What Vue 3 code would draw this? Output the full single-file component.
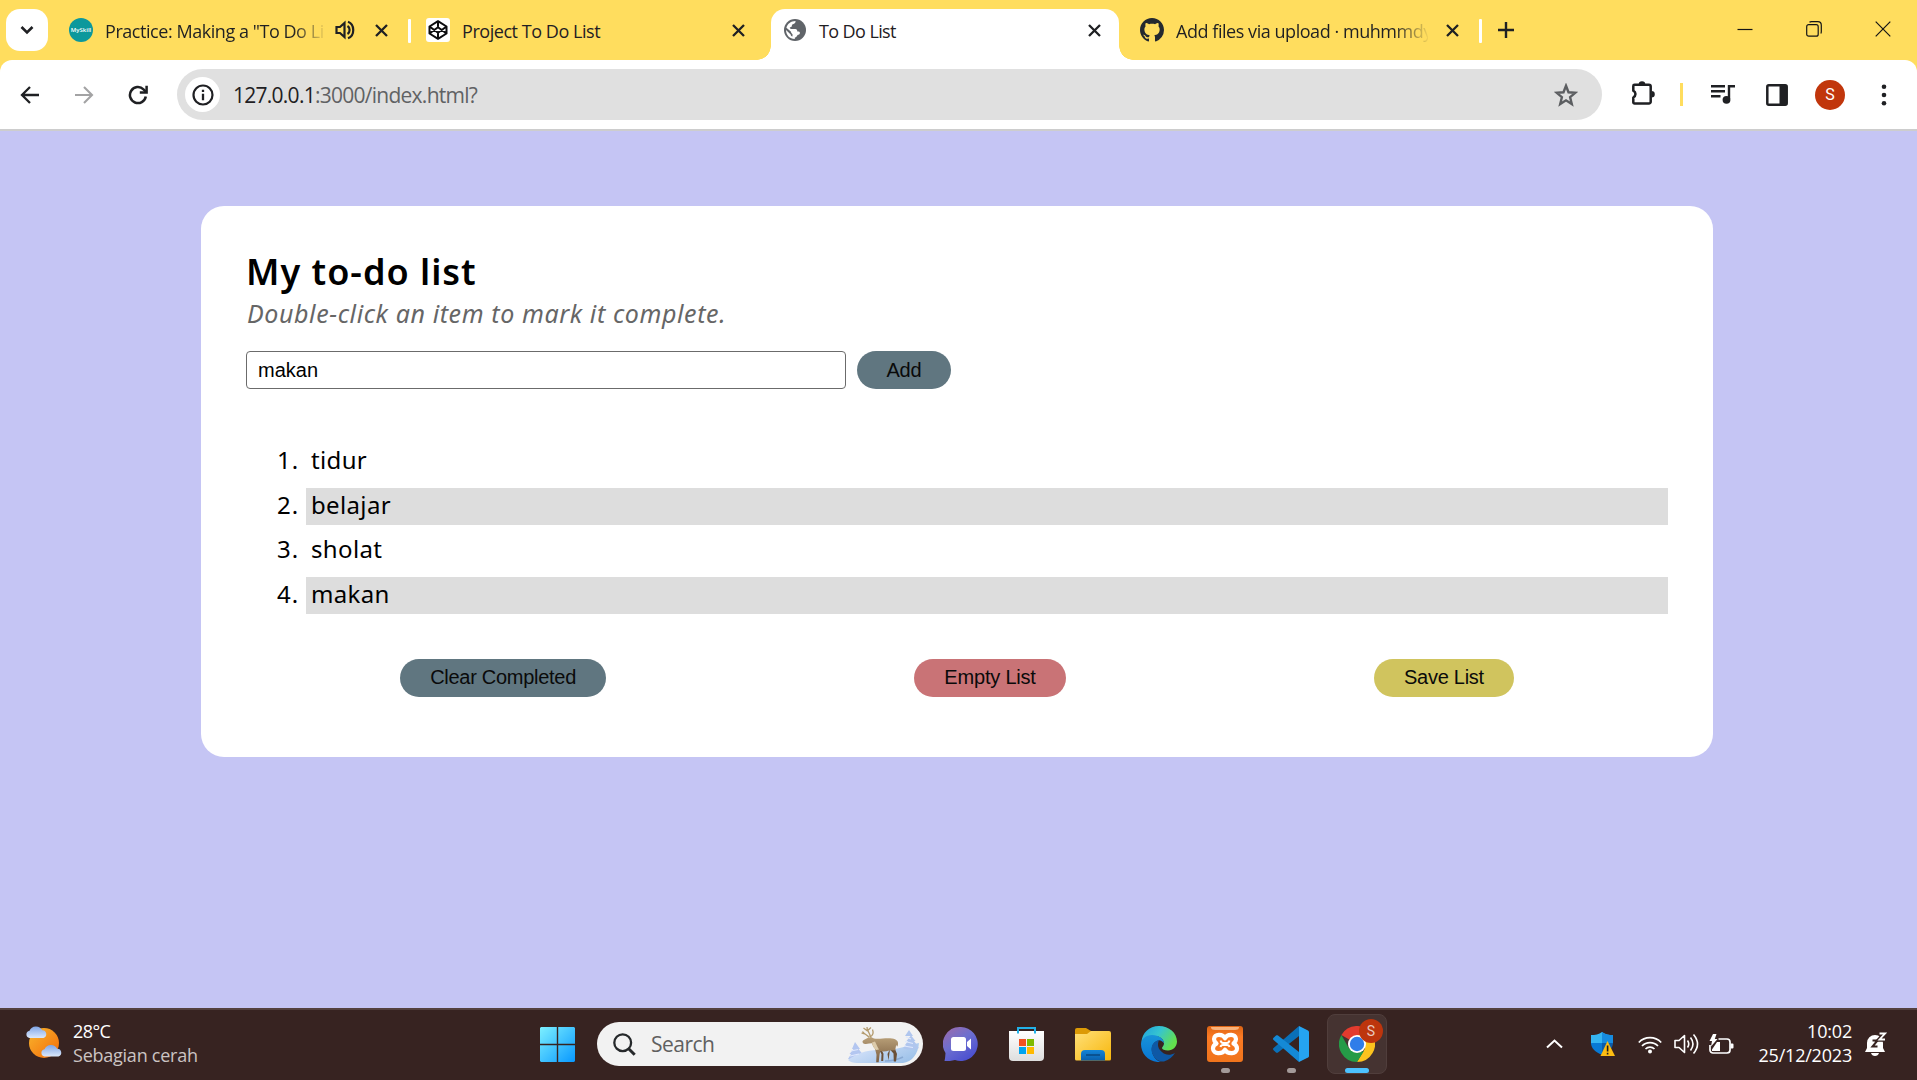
<script setup>
import { ref } from 'vue'

const draft = ref('makan')
const items = ref(['tidur', 'belajar', 'sholat', 'makan'])
</script>

<template>
  <div class="screen">
    <header class="tabstrip">
      <div class="tabsearch">
        <svg width="14" height="10" viewBox="0 0 14 10"><path d="M1.500 2l5.500 5.500L12.500 2" fill="none" stroke="#1f2023" stroke-width="2.600" /></svg>
      </div>
      <div class="tab t1">
        <span class="myskill">MySkill</span>
        <span class="title fade">Practice: Making a "To Do Li</span>
        <svg class="speaker" width="20" height="20" viewBox="0 0 20 20" fill="none" stroke="#1f2023" stroke-width="2.200"><path d="M1.500 7v6h3.500l4.500 4V3L5 7z" /><path d="M12.500 6c2.800 1.600 2.800 6.400 0 8" /><path d="M13 1.700c7 2.600 7 14 0 16.600" /></svg>
        <svg class="x" width="13" height="13" viewBox="0 0 13 13"><path d="M1 1l11 11M12 1L1 12" /></svg>
      </div>
      <i class="sep"></i>
      <div class="tab t2">
        <span class="codepen">
          <svg width="20" height="20" viewBox="0 0 20 20" fill="none" stroke="#0c0c0e" stroke-width="2" stroke-linejoin="round"><path d="M10 1.200l8.500 5.300v7L10 18.800l-8.500-5.300v-7zM10 1.200v5.300M10 13.500v5.300M1.500 6.500L10 12.800l8.500-6.300M1.500 13.500L10 7.200l8.500 6.300" /></svg>
        </span>
        <span class="title s2">Project To Do List</span>
        <svg class="x" width="13" height="13" viewBox="0 0 13 13"><path d="M1 1l11 11M12 1L1 12" /></svg>
      </div>
      <div class="tab t3">
        <svg class="globe" width="22" height="22" viewBox="0 0 22 22"><circle cx="11" cy="11" r="11" fill="#606469" /><path d="M11.500 2c.3 1.400-.6 2.600-2 3-1 .2-1.600.8-1.700 1.900-.2 1.100-1 1.300-2 1.300.1 1.400.9 1.900 2.200 1.900h3.300c1.500.1 2 1.100 2 2.500 1.500-.1 2.700.3 2.600 1.500-.1 1.500-1.400 1.700-2.400 2-.6 1.300-1.400 2.300-2.700 2.700V20C5.800 20 2 16 2 11l4.700 4.400c0 1.100.5 1.800 1.800 2v-2.200c-1-.9-1.500-1.700-1.700-2.700L2.400 8.700C3.500 4.800 7 2 11.500 2z" fill="#fff" /></svg>
        <span class="title s3">To Do List</span>
        <svg class="x" width="13" height="13" viewBox="0 0 13 13"><path d="M1 1l11 11M12 1L1 12" /></svg>
      </div>
      <div class="tab t4">
        <svg class="github" width="24" height="24" viewBox="0 0 16 16" fill="#24292f"><path d="M8 0C3.580 0 0 3.580 0 8c0 3.540 2.290 6.530 5.470 7.590.4.070.55-.17.55-.38 0-.19-.01-.82-.01-1.490-2.010.37-2.530-.49-2.690-.94-.09-.23-.48-.94-.82-1.130-.28-.15-.68-.52-.01-.53.630-.01 1.080.58 1.230.820.720 1.210 1.870.870 2.330.660.070-.52.280-.87.510-1.070-1.780-.2-3.640-.89-3.640-3.950 0-.87.310-1.590.820-2.150-.08-.2-.36-1.020.080-2.120 0 0 .67-.21 2.200.820.640-.18 1.320-.27 2-.27s1.360.090 2 .270c1.530-1.040 2.200-.82 2.200-.82.440 1.100.160 1.920.080 2.120.510.560.820 1.270.820 2.150 0 3.070-1.870 3.750-3.650 3.950.290.250.540.730.540 1.480 0 1.070-.01 1.930-.01 2.200 0 .21.150.460.550.380A8.010 8.010 0 0 0 16 8c0-4.420-3.580-8-8-8z" /></svg>
        <span class="title fade s4">Add files via upload · muhmmdy</span>
        <svg class="x" width="13" height="13" viewBox="0 0 13 13"><path d="M1 1l11 11M12 1L1 12" /></svg>
      </div>
      <i class="sep"></i>
      <svg class="plus" width="16" height="16" viewBox="0 0 16 16"><path d="M8 0v16M0 8h16" stroke="#1f2023" stroke-width="2.400" /></svg>
      <div class="wincontrols">
        <svg width="16" height="16" viewBox="0 0 16 16"><path d="M.5 8.500h15" /></svg>
        <svg width="16" height="16" viewBox="0 0 16 16"><rect x=".7" y="3.700" width="11.500" height="11.500" rx="2" /><path d="M3.500 1.200c.5-.4 1-.5 2-.5h6.300c2.200 0 3.500 1.300 3.500 3.500v6.300c0 1-.1 1.500-.5 2" /></svg>
        <svg width="16" height="16" viewBox="0 0 16 16"><path d="M.7.700l14.600 14.600M15.300.700L.7 15.300" /></svg>
      </div>
    </header>

    <nav class="toolbar">
      <svg class="back" width="20" height="18" viewBox="0 0 20 18" fill="none" stroke="#1f2023" stroke-width="2.300"><path d="M19 9H2M10 1L2 9l8 8" /></svg>
      <svg class="fwd" width="20" height="18" viewBox="0 0 20 18" fill="none" stroke="#a3a3a4" stroke-width="2.100"><path d="M1 9h17M10 1l8 8-8 8" /></svg>
      <svg class="reload" width="20" height="20" viewBox="0 0 20 20" fill="none" stroke="#1f2023" stroke-width="2.500"><path d="M17.800 11.500A8 8 0 1 1 15.500 4.300L18 6.800" /><path d="M18.600.8v6.800h-6.800" /></svg>
      <div class="omnibox">
        <span class="info"><svg width="22" height="22" viewBox="0 0 22 22"><circle cx="11" cy="11" r="9.500" fill="none" stroke="#1f2023" stroke-width="2.200" /><path d="M11 9.700v6.500M11 5.700v2.400" stroke="#1f2023" stroke-width="2.300" /></svg></span>
        <span class="url"><b>127.0.0.1</b>:3000/index.html?</span>
        <svg class="star" width="24" height="24" viewBox="0 0 24 24" fill="none" stroke="#5c5e61" stroke-width="2.400"><path d="M12 2.800l2.500 6.500 6.800.5-5.200 4.400 1.700 6.800-5.800-3.700-5.800 3.700 1.700-6.800-5.200-4.400 6.800-.5z" /></svg>
      </div>
      <svg class="ext" width="25" height="26" viewBox="0 0 25 26"><path d="M3.300 4.900a1.200 1.200 0 0 1 1.200-1.200h14.400a1.800 1.800 0 0 1 1.800 1.800v15.200a1.800 1.800 0 0 1-1.800 1.800H4.500a1.200 1.200 0 0 1-1.200-1.200v-4.800c2.900-1.600 2.900-5.200 0-6.800z" fill="none" stroke="#1f2023" stroke-width="2.500" stroke-linejoin="round" /><path d="M8.700 3.500a3.300 3.300 0 0 1 6.600 0zM21.500 10a3.300 3.300 0 0 1 0 6.600z" fill="#1f2023" /></svg>
      <i class="ysep"></i>
      <svg class="queue" width="24" height="22" viewBox="0 0 24 22"><path d="M0 3.300h14M0 8.300h14M0 13.300h9.500M18 16V3.300H24" fill="none" stroke="#1f2023" stroke-width="2.400" /><circle cx="15.500" cy="16.800" r="3.900" fill="#1f2023" /></svg>
      <svg class="panel" width="22" height="22" viewBox="0 0 22 22"><rect x="1.300" y="1.300" width="19.400" height="19.400" rx="1.500" fill="none" stroke="#1f2023" stroke-width="2.500" /><path d="M13.500 1h7v20h-7z" fill="#1f2023" /></svg>
      <span class="avatar">S</span>
      <svg class="dots" width="6" height="22" viewBox="0 0 6 22" fill="#1f2023"><circle cx="3" cy="2.700" r="2.300" /><circle cx="3" cy="11" r="2.300" /><circle cx="3" cy="19.300" r="2.300" /></svg>
    </nav>

    <main class="page">
      <section class="card">
        <h1>My to-do list</h1>
        <p class="hint"><em>Double-click an item to mark it complete.</em></p>
        <form class="entry" @submit.prevent>
          <input v-model="draft" type="text" />
          <button class="btn slate">Add</button>
        </form>
        <ol>
          <li v-for="(item, i) in items" :key="item"><span class="num">{{ i + 1 }}.</span><span class="item">{{ item }}</span></li>
        </ol>
        <div class="actions">
          <button class="btn slate">Clear Completed</button>
          <button class="btn red">Empty List</button>
          <button class="btn gold">Save List</button>
        </div>
      </section>
    </main>

    <footer class="taskbar">
      <div class="weather">
        <svg width="36" height="34" viewBox="0 0 36 34">
          <defs>
            <linearGradient id="sun" x1="0" y1="0" x2="1" y2="1"><stop offset="0" stop-color="#f8b62d" /><stop offset="1" stop-color="#f36b0a" /></linearGradient>
            <linearGradient id="cl" x1="0" y1="0" x2="0" y2="1"><stop offset="0" stop-color="#7fa5e6" /><stop offset="1" stop-color="#dbe8fb" /></linearGradient>
          </defs>
          <circle cx="18" cy="18" r="15" fill="url(#sun)" />
          <path d="M3.500 13a3.700 3.700 0 0 1 0-7.300 7 7 0 0 1 12.700-.5A4 4 0 0 1 17.500 13z" fill="url(#cl)" />
          <path d="M18.500 31.500a3.700 3.700 0 0 1 0-7.300 7 7 0 0 1 12.700-.5 4 4 0 0 1 1.300 7.800z" fill="url(#cl)" />
        </svg>
        <div><p class="temp">28°C</p><p class="cond">Sebagian cerah</p></div>
      </div>

      <div class="apps">
        <svg class="start" width="35" height="35" viewBox="0 0 35 35">
          <defs><linearGradient id="win" x1="0" y1="0" x2="1" y2="1"><stop offset="0" stop-color="#7df0ff" /><stop offset="1" stop-color="#0898ff" /></linearGradient></defs>
          <path d="M1 0h15.800v16.800H0V1zM18.200 0H34l1 1v15.800H18.200zM0 18.200h16.800V35H1l-1-1zM18.200 18.200H35V34l-1 1H18.200z" fill="url(#win)" />
        </svg>
        <div class="search">
          <svg class="lens" width="23" height="23" viewBox="0 0 23 23"><circle cx="9.700" cy="9.700" r="8.400" fill="none" stroke="#26292b" stroke-width="2.300" /><path d="M15.700 15.700l6 6" stroke="#26292b" stroke-width="3" /></svg>
          <span>Search</span>
          <svg class="deer" width="74" height="40" viewBox="0 0 74 40">
            <defs>
              <linearGradient id="snow" x1="0" y1="0" x2="1" y2=".6"><stop offset="0" stop-color="#e3eafd" /><stop offset="1" stop-color="#9fc3ea" /></linearGradient>
              <linearGradient id="fur" x1="0" y1="0" x2="0" y2="1"><stop offset="0" stop-color="#b9a078" /><stop offset="1" stop-color="#7c5f42" /></linearGradient>
            </defs>
            <path d="M8 18l5 7h-1.500l4 5H14l3 5H1l3-5H2.500l4-5H5z" fill="#b3c6f0" />
            <path d="M1 36c8-6 18-10 30-10 18 1 27-4 41-7-1 11-7 19-16 20H10c-4 0-7-1-9-3z" fill="url(#snow)" />
            <path d="M61 5l4 6h-1.500l4 5H66l3 4h-1l3 3c-5 2-12 2-16 0l3-3h-1l3-4h-1.500l4-5H57z" fill="#b0c6ee" transform="translate(1 1)" />
            <path d="M59 13l5 2M58 17.500l8 2M57 22l9 1.500M4 27l7-1.500M3 32l9-2" stroke="#dfe8fd" stroke-width="1.200" />
            <path d="M38 37q10 0 18-4" stroke="#7596c4" stroke-width="1.500" fill="none" opacity=".6" />
            <g transform="translate(2 0)">
              <path d="M46 25l2 5-1 7.500h-2.200l-.3-8-3.500-4zM41 25l-2.500 5 1 6.500" fill="#6b5038" />
              <path d="M31 25l2.500 5-.3 7" fill="none" stroke="#6b5038" stroke-width="2" />
              <path d="M13.500 18c0-2 2.500-2.500 5-4l3.500-1 3 1.500c4 .8 9-.2 14-.2 6 0 9.500 1.200 10 4.500.3 2.500-.6 3.500-1 4l-.8-2-1 5.500-6 .2c-3 .8-6 1.300-9 .5l-.7 4-.8 7.200h-2.500l.3-7.500-1.500-6c-2-2-2.500-4-3-5.500l-3 .3c-2 .6-5 .8-6-.5z" fill="url(#fur)" />
              <path d="M23 18.500l3-1c1.500 2.500 2 5 4 8l-3 .5c-2-2-3.500-4-4-7.500z" fill="#dccbaa" />
              <path d="M20 13.500c-1.500-3-5-3-6.500-6M15.500 10l-3-1M21 13c1-4-3.500-5-3-10M18.500 7l-4-3M18.700 6.500L22 3.500M21 13c3-1.500 4-3.500 2.500-7.500" fill="none" stroke="#b39a6c" stroke-width="1.300" />
            </g>
          </svg>
        </div>
        <svg class="chat" width="36" height="36" viewBox="0 0 36 36">
          <defs><linearGradient id="chat" x1="0" y1="0" x2=".7" y2="1"><stop offset="0" stop-color="#a06aa8" /><stop offset=".5" stop-color="#6d6fcf" /><stop offset="1" stop-color="#4a4fd0" /></linearGradient></defs>
          <path d="M18 1a17 17 0 1 1-6 33c-3 1-7 1-10.500 1 .8-3 .8-6 1-8A17 17 0 0 1 18 1z" fill="url(#chat)" /><rect x="8" y="11" width="15" height="14" rx="2.500" fill="#fff" /><path d="M24 16l4-3.500v11L24 20z" fill="#fff" />
        </svg>
        <svg class="store" width="36" height="36" viewBox="0 0 36 36">
          <defs><linearGradient id="bag" x1="0" y1="0" x2="0" y2="1"><stop offset="0" stop-color="#fff" /><stop offset="1" stop-color="#dedede" /></linearGradient></defs>
          <path d="M0 5h35v26a4 4 0 0 1-4 4H4a4 4 0 0 1-4-4z" fill="url(#bag)" /><path d="M9 7.500V2h17v5.500" fill="none" stroke="#22b1e8" stroke-width="2" />
          <path d="M10 13h7v7h-7z" fill="#f25022" /><path d="M18 13h7v7h-7z" fill="#7fba00" /><path d="M10 21h7v7h-7z" fill="#00a4ef" /><path d="M18 21h7v7h-7z" fill="#ffb900" />
        </svg>
        <svg class="folder" width="36" height="36" viewBox="0 0 36 36">
          <defs><linearGradient id="fold" x1="0" y1="0" x2="1" y2="1"><stop offset="0" stop-color="#ffe079" /><stop offset="1" stop-color="#f8b70c" /></linearGradient><linearGradient id="fb" x1="0" y1="0" x2="0" y2="1"><stop offset="0" stop-color="#1384d8" /><stop offset="1" stop-color="#0a5fac" /></linearGradient></defs>
          <path d="M0 4a2 2 0 0 1 2-2h9l5 3v6H0z" fill="#dc9a06" /><path d="M0 8h12l4-3h18a2 2 0 0 1 2 2v26a1.500 1.500 0 0 1-1.500 1.500h-33A1.500 1.500 0 0 1 0 33z" fill="url(#fold)" /><path d="M6 34.500V28a4 4 0 0 1 4-4h16a4 4 0 0 1 4 4v6.500z" fill="url(#fb)" /><path d="M11 29h14" stroke="#0a4a86" stroke-width="1.600" />
        </svg>
        <svg class="edge" width="36" height="36" viewBox="0 0 36 36">
          <defs><linearGradient id="e1" x1="0" y1="0" x2="1" y2=".5"><stop offset="0" stop-color="#1d9fe0" /><stop offset=".5" stop-color="#36c4d0" /><stop offset="1" stop-color="#63e04d" /></linearGradient><linearGradient id="e2" x1="0" y1="0" x2="0" y2="1"><stop offset="0" stop-color="#1893d8" /><stop offset="1" stop-color="#0875d4" /></linearGradient></defs>
          <path d="M18 0c10 0 18 7 18 15.500 0 5-4 9-9 9-3.500 0-6-1-6-2.500 0-1 2-2 2-4.500 0-4-4-7.500-10-7.500-6 0-11 3-12.500 6C1 7 8 0 18 0z" fill="url(#e1)" />
          <path d="M0 18c0-5 5-9 11-9 7 0 12 4 12 8.500-1-2-3-3.300-5-3.300-5 1-8 6-7 11 1 6 5 10 9 10.800C8 37 0 28 0 18z" fill="url(#e2)" />
          <path d="M18 14c-8 2-9 10-6 15 3 6 8 7 11 6.500 5-1.500 9-5 11-8.500-5 3-10 2-13-1-4-3-5-7-3-12z" fill="#0e58a5" />
        </svg>
        <div class="app">
          <svg width="36" height="36" viewBox="0 0 36 36">
            <defs><linearGradient id="xa" x1="0" y1="0" x2="0" y2="1"><stop offset="0" stop-color="#dd6414" /><stop offset=".3" stop-color="#fb7a24" /><stop offset="1" stop-color="#f0741c" /></linearGradient></defs>
            <rect width="36" height="36" rx="3" fill="url(#xa)" /><path d="M4 1h28c0 3-3 3-6 3H10C7 4 4 4 4 1z" fill="#f9b37c" />
            <path d="M18 12.300C16 7.500 7 7.500 7 13c0 2.500 1.500 3.500 2.500 4.500C7.500 18.500 6 20 6 22.500c0 6 9.500 6 12 1.200 2.500 4.800 12 4.800 12-1.200 0-2.500-1.500-4-3.500-5C27.500 16.500 29 15.500 29 13c0-5.500-9-5.500-11-.7z" fill="none" stroke="#fff" stroke-width="4.200" stroke-linejoin="round" />
            <path d="M13.500 14.500c.5 1.500 1.200 2.500 2.500 2.500h4c1.300 0 2-1 2.500-2.500M13.500 21c.3-1.300 1-2 2.500-2h4c1.500 0 2.200.7 2.500 2" fill="none" stroke="#fff" stroke-width="2" />
          </svg>
        </div>
        <div class="app">
          <svg width="36" height="36" viewBox="0 0 36 36">
            <path d="M26 0v10L5 26.500c-.6.500-1.400.5-2 0l-2.400-2.300a1.500 1.500 0 0 1 0-2.200z" fill="#0a70b8" /><path d="M26 36V26L5 9.500c-.6-.5-1.400-.5-2 0L.6 11.800a1.500 1.500 0 0 0 0 2.200z" fill="#1489d6" /><path d="M26 0l9 4.500c.6.300 1 .9 1 1.500v24c0 .7-.4 1.300-1 1.600L26 36z" fill="#25a4f1" />
          </svg>
        </div>
        <div class="active">
          <svg width="36" height="36" viewBox="0 0 36 36">
            <path d="M18 18L2.400 9A18 18 0 0 1 33.600 9H18z" fill="#e33b2e" /><path d="M18 18L33.600 9A18 18 0 0 1 18 36l8-13.500z" fill="#fcc31e" /><path d="M2.400 9L10 22.500 18 27l7-2-7 11A18 18 0 0 1 2.400 9z" fill="#259b47" /><path d="M18 9h15.600l-8 13z" fill="#fcc31e" /><circle cx="18" cy="18" r="9" fill="#fff" /><circle cx="18" cy="18" r="7.200" fill="#2f7de9" />
          </svg>
          <span class="badge">S</span>
        </div>
      </div>

      <div class="tray">
        <svg class="up" width="17" height="10" viewBox="0 0 17 10"><path d="M1 8.500L8.500 1.500 16 8.500" fill="none" stroke="#fff" stroke-width="2" /></svg>
        <svg class="shield" width="24" height="25" viewBox="0 0 24 25"><path d="M11 0c3 2.500 7 3 11 3v9H0V3c4 0 8-.5 11-3z" fill="#35b5f1" /><path d="M11 0c3 2.500 7 3 11 3v9H11z" fill="#168ce0" /><path d="M0 11h11v12C4 20 0 16 0 11z" fill="#0879d4" /><path d="M11 11h11c0 5-4 9-11 12z" fill="#0b5cab" /><path d="M16.500 9L24 24H9.500z" fill="#fdbd12" /><path d="M16.600 13.500v6M16.600 20.800v1.800" stroke="#1d1d1d" stroke-width="1.600" /></svg>
        <svg class="wifi" width="24" height="19" viewBox="0 0 24 19" fill="none" stroke="#fff" stroke-width="1.700"><path d="M.8 7.500a15.500 15.500 0 0 1 22.400 0M4 11a11 11 0 0 1 16 0M7.500 14a6.500 6.500 0 0 1 9 0" /><circle cx="12" cy="16.500" r="2" fill="#fff" stroke="none" /></svg>
        <svg class="vol" width="25" height="22" viewBox="0 0 25 22" fill="none" stroke="#fff" stroke-width="1.600"><path d="M1 7.500v7h4l5.500 5V2.500L5 7.500z" stroke-linejoin="round" /><path d="M13.500 7.500q2.500 3.500 0 7M16.500 4.500q5 6.500 0 13M19.500 1.500q8 9.500 0 19" /></svg>
        <svg class="bat" width="25" height="21" viewBox="0 0 25 21"><path d="M9.500 5h8.500a3 3 0 0 1 3 3v8a3 3 0 0 1-3 3H4a3 3 0 0 1-3-3v-5" fill="none" stroke="#fff" stroke-width="1.700" /><path d="M21.500 9.500h2a1 1 0 0 1 1 1v3a1 1 0 0 1-1 1h-2zM3 17v-1.500l5-7.500h3v9zM4 0L.5 7H3l-1 5.500L8.500 5H5.800L7.500 0z" fill="#fff" /></svg>
        <div class="clock"><p>10:02</p><p class="date">25/12/2023</p></div>
        <svg class="bell" width="22" height="24" viewBox="0 0 22 24"><path d="M2 11a8 8 0 0 1 16 0v5l2 4H0l2-4zM6 21h8c-.5 2-2 3-4 3s-3.500-1-4-3z" fill="#fff" /><path d="M14.500 1.500H20l-5.500 6H20" fill="none" stroke="#372321" stroke-width="4.500" /><path d="M7.500 8.500h5l-5 6h5" fill="none" stroke="#372321" stroke-width="2" /><path d="M14.500 1.500H20l-5.500 6H20" fill="none" stroke="#fff" stroke-width="1.800" /></svg>
      </div>
    </footer>
  </div>
</template>

<style>
body { margin: 0; overflow: hidden; }
</style>

<style scoped>
* { box-sizing: border-box; }
svg, i { display: block; flex: none; }
p, h1, ol { margin: 0; padding: 0; }
.screen { width: 1917px; height: 1080px; display: flex; flex-direction: column; background: #c5c5f4; font-family: "Open Sans", sans-serif; overflow: hidden; }

.tabstrip { height: 60px; flex: none; background: #ffdd5e; display: flex; align-items: flex-start; padding-left: 6px; position: relative; z-index: 1; }
.tabsearch { width: 42px; height: 42px; margin-top: 9px; border-radius: 14px; background: #fff; display: flex; align-items: center; justify-content: center; flex: none; }
.tab { height: 51px; margin-top: 9px; padding-bottom: 9px; display: flex; align-items: center; flex: none; color: #1f2023; }
.t1 { width: 360px; padding-left: 21px; }
.t2 { width: 360px; padding-left: 15px; }
.t3 { width: 348px; padding-left: 13px; background: #fff; border-radius: 14px 14px 0 0; position: relative; }
.t3::before, .t3::after { content: ""; position: absolute; bottom: 0; width: 14px; height: 14px; }
.t3::before { left: -14px; background: radial-gradient(circle at 0 0, transparent 13.500px, #fff 14px); }
.t3::after { right: -14px; background: radial-gradient(circle at 100% 0, transparent 13.500px, #fff 14px); }
.t4 { width: 360px; padding-left: 21px; }
.title { font-size: 18px; line-height: 24px; white-space: nowrap; margin-left: 12px; letter-spacing: -.45px; padding-top: 2px; }
.fade { width: 220px; -webkit-mask-image: linear-gradient(90deg, #000 188px, transparent 222px); mask-image: linear-gradient(90deg, #000 188px, transparent 222px); }
.s4 { width: 252px; -webkit-mask-image: linear-gradient(90deg, #000 218px, transparent 254px); mask-image: linear-gradient(90deg, #000 218px, transparent 254px); }
.s3 { margin-left: 13px; letter-spacing: -.6px; }
.x { fill: none; stroke: #1f2023; stroke-width: 2.300; margin-left: auto; }
.t1 .x { margin-right: 20px; }
.t2 .x { margin-right: 26px; }
.t3 .x { margin-right: 18px; }
.t4 .x { margin-right: 20px; }
.speaker { margin-left: 10px; }
.myskill { width: 24px; height: 24px; border-radius: 50%; background: #0c989c; color: #fff; font-size: 6px; font-weight: 600; display: flex; align-items: center; justify-content: center; }
.codepen { width: 24px; height: 24px; background: #fff; border-radius: 3px; display: flex; align-items: center; justify-content: center; }
.sep { width: 3px; height: 24px; margin-top: 19px; background: #fff; border-radius: 1px; }
.plus { margin: 22px 0 0 16px; }
.wincontrols { margin: 21px 26px 0 auto; display: flex; gap: 53px; }
.wincontrols svg { fill: none; stroke: #151515; stroke-width: 1.200; }

.toolbar { height: 71px; flex: none; background: #fff; border-bottom: 2px solid #cdcdcd; display: flex; align-items: center; padding-left: 20px; border-radius: 12px 12px 0 0; box-shadow: 0 -12px 0 #ffdd5e; }
.fwd { margin-left: 34px; }
.reload { margin-left: 34px; }
.omnibox { width: 1425px; height: 51px; margin-left: 29px; background: #e0e0e0; border-radius: 26px; display: flex; align-items: center; padding: 0 24px 0 8px; }
.info { width: 35px; height: 35px; border-radius: 50%; background: #fff; display: flex; align-items: center; justify-content: center; }
.url { margin-left: 13px; font-size: 21px; color: #606264; letter-spacing: -.74px; flex: 1; white-space: nowrap; }
.url b { font-weight: 400; color: #1f2023; }
.ext { margin-left: 28px; margin-bottom: 1px; }
.ysep { width: 3px; height: 23px; background: #ffdd5e; margin-left: 25px; }
.queue { margin-left: 28px; margin-bottom: 2px; }
.panel { margin-left: 31px; }
.avatar { width: 30px; height: 30px; margin-left: 27px; border-radius: 50%; background: #c1360c; color: #fff; font: 16px Roboto, sans-serif; display: flex; align-items: center; justify-content: center; }
.dots { margin-left: 36px; }

.page { flex: 1; padding: 75px 0 0 201px; }
.card { width: 1512px; height: 551px; background: #fff; border-radius: 23px; padding: 44px 45px 0; font-family: "Noto Sans", sans-serif; color: #000; display: flex; flex-direction: column; }
h1 { font-size: 36px; line-height: 44px; font-weight: 600; letter-spacing: 1px; }
.hint { font-size: 25px; line-height: 38px; color: #666; letter-spacing: .6px; margin-left: 1px; }
.entry { display: flex; gap: 11px; margin-top: 19px; }
input { width: 600px; height: 38px; border: 1px solid #6b6b6b; border-radius: 4px; padding: 0 11px; font: 20px "Liberation Sans", sans-serif; outline: none; color: #000; background: #fff; }
.btn { height: 38px; padding: 0 30px; border: 0; border-radius: 19px; font: 20px "Liberation Sans", sans-serif; letter-spacing: -.28px; color: #0a0a0a; white-space: nowrap; }
.entry .btn { padding: 0 29.500px; }
.slate { background: #607680; }
.red { background: #c97376; letter-spacing: -.2px; }
.gold { background: #d0c45e; }
ol { list-style: none; margin-top: 54px; display: flex; flex-direction: column; gap: 7.500px; }
li { display: flex; height: 37px; font-size: 24px; line-height: 34.500px; letter-spacing: .35px; }
.num { width: 60px; padding-right: 7px; text-align: right; letter-spacing: .9px; }
.item { flex: 1; padding-left: 5px; }
li:nth-child(even) .item { background: #ddd; }
.actions { display: flex; justify-content: space-around; margin-top: 45px; }

.taskbar { height: 72px; flex: none; background: #372321; border-top: 2px solid #54413f; padding-bottom: 2px; display: flex; align-items: center; color: #fff; }
.weather { display: flex; width: 540px; padding: 0 0 2px 26px; gap: 11px; flex: none; font-size: 18px; line-height: 24px; }
.weather svg { margin-top: 6px; }
.temp { letter-spacing: -.6px; }
.cond { color: #cbc4c3; letter-spacing: -.24px; }
.apps { display: flex; align-items: center; flex: none; }
.search { width: 326px; height: 44px; margin-left: 22px; border-radius: 22px; background: #f2f2f2; display: flex; align-items: center; padding: 0 2px 0 16px; overflow: hidden; }
.search span { margin-left: 15px; color: #606060; font-size: 21px; letter-spacing: -.5px; flex: 1; }
.chat { margin-left: 20px; }
.store { margin-left: 30px; }
.folder, .edge, .app { margin-left: 30px; }
.app { position: relative; }
.app::after { content: ""; position: absolute; left: 14px; bottom: -11px; width: 9px; height: 5px; border-radius: 3px; background: #a39a99; }
.active { margin-left: 18px; width: 60px; height: 60px; border-radius: 8px; background: #453331; border: 1px solid #503e3c; display: flex; align-items: center; justify-content: center; position: relative; }
.badge { position: absolute; right: 3px; top: 4px; width: 24px; height: 24px; border-radius: 50%; background: #bd350d; color: #e8c8bf; font: 14px Roboto, sans-serif; display: flex; align-items: center; justify-content: center; }
.active::after { content: ""; position: absolute; left: 17px; bottom: 0; width: 24px; height: 5px; border-radius: 3px; background: #4cc2ff; }
.tray { margin-left: auto; display: flex; align-items: center; padding-right: 30px; }
.shield { margin-left: 28px; }
.wifi { margin-left: 23px; }
.vol { margin-left: 12px; }
.bat { margin-left: 10px; }
.clock { width: 118px; text-align: right; font-size: 18px; line-height: 24px; margin-right: 13px; padding-bottom: 2px; letter-spacing: -.2px; }
</style>
